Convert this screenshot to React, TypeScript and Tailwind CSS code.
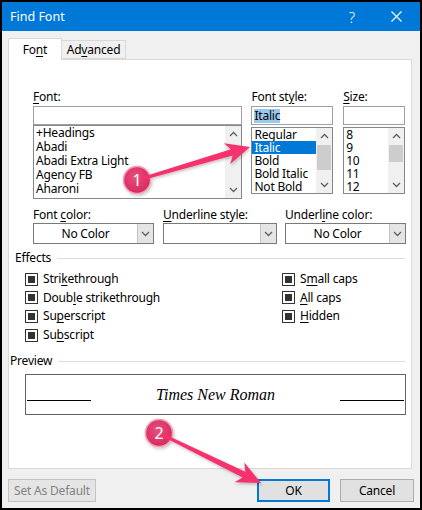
import React from "react";

// access-key underline
const K = ({ children }: { children: React.ReactNode }) => (
  <span className="underline underline-offset-[2px] decoration-[1px]">{children}</span>
);

function Chev({ up }: { up?: boolean }) {
  return (
    <svg width="9" height="6" viewBox="0 0 9 6">
      <polyline
        points={up ? "1,5 4.5,1.5 8,5" : "1,1 4.5,4.5 8,1"}
        fill="none"
        stroke="#606060"
        strokeWidth="1.3"
      />
    </svg>
  );
}

interface ListProps {
  items: string[];
  sel?: number;
  box: string;
  row: string;
  thumb: string;
}

function ListBox({ items, sel, box, row, thumb }: ListProps) {
  return (
    <div className={`flex border border-[#828790] bg-white ${box}`}>
      <div className="flex-1 flex flex-col">
        {items.map((it, i) => (
          <div
            key={it}
            className={`${row} flex items-center pl-[2px] whitespace-nowrap ${
              i === sel ? "bg-[#0078d7] text-white" : ""
            }`}
          >
            {it}
          </div>
        ))}
      </div>
      <div className="w-[16px] bg-[#f0f0f0] flex flex-col">
        <div className="h-[16px] flex items-center justify-center">
          <Chev up />
        </div>
        <div className="flex-1 flex flex-col">
          <div className={`bg-[#cdcdcd] mx-[1px] ${thumb}`} />
        </div>
        <div className="h-[16px] flex items-center justify-center">
          <Chev />
        </div>
      </div>
    </div>
  );
}

function Drop({ value, w }: { value: string; w: string }) {
  return (
    <div className={`flex h-[21px] border border-[#7a7a7a] bg-white ${w}`}>
      <div className="flex-1 flex items-center justify-center">{value}</div>
      <div className="w-[16px] bg-[#e5e5e5] border-l border-[#c4c4c4] flex items-center justify-center">
        <Chev />
      </div>
    </div>
  );
}

function Check({ children }: { children: React.ReactNode }) {
  return (
    <div className="h-[18.6px] flex items-center">
      <div className="w-[13px] h-[13px] border border-[#333] bg-white flex items-center justify-center mr-[5px]">
        <div className="w-[7px] h-[7px] bg-[#333]" />
      </div>
      <span>{children}</span>
    </div>
  );
}

// polygon for a tapered annotation arrow
function arrowPts(t: [number, number], p: [number, number]) {
  const dx = p[0] - t[0];
  const dy = p[1] - t[1];
  const len = Math.hypot(dx, dy);
  const ux = dx / len;
  const uy = dy / len;
  const nx = -uy;
  const ny = ux;
  const at = (d: number, w: number) =>
    `${(p[0] - ux * d + nx * w).toFixed(1)},${(p[1] - uy * d + ny * w).toFixed(1)}`;
  return [
    `${(t[0] + nx * 1.5).toFixed(1)},${(t[1] + ny * 1.5).toFixed(1)}`,
    at(19, 3.2),
    at(24, 11),
    `${p[0]},${p[1]}`,
    at(24, -11),
    at(19, -3.2),
    `${(t[0] - nx * 1.5).toFixed(1)},${(t[1] - ny * 1.5).toFixed(1)}`,
  ].join(" ");
}

function Annotations() {
  return (
    <svg className="absolute left-0 top-0 pointer-events-none" width="422" height="510" viewBox="0 0 422 510">
      <defs>
        <filter id="sh" x="-20%" y="-20%" width="140%" height="140%">
          <feDropShadow dx="1" dy="1.5" stdDeviation="1.5" floodColor="#000" floodOpacity="0.25" />
        </filter>
        <radialGradient id="cg" cx="45%" cy="40%" r="60%">
          <stop offset="0%" stopColor="#e9507f" />
          <stop offset="100%" stopColor="#d8285e" />
        </radialGradient>
      </defs>
      <g filter="url(#sh)">
        <circle cx="137" cy="180" r="13.5" fill="url(#cg)" stroke="#f29ab6" strokeWidth="1.5" />
        <polygon points={arrowPts([141, 179], [250, 147])} fill="#f5336d" />
        <circle cx="159" cy="433" r="13.5" fill="url(#cg)" stroke="#f29ab6" strokeWidth="1.5" />
        <polygon points={arrowPts([163, 435], [261, 483])} fill="#f5336d" />
      </g>
      <text x="137" y="186" textAnchor="middle" fill="#fff" fontSize="16" fontFamily="Noto Sans, sans-serif">
        1
      </text>
      <text x="159" y="439" textAnchor="middle" fill="#fff" fontSize="16" fontFamily="Noto Sans, sans-serif">
        2
      </text>
    </svg>
  );
}

export default function App() {
  return (
    <div className="relative w-[422px] h-[510px] bg-black p-[2px] font-['Noto_Sans',sans-serif] text-[12px] leading-[16px] tracking-[-0.2px] text-black">
      <div className="w-full h-full bg-[#f0f0f0] flex flex-col">
        {/* title bar */}
        <div className="h-[29px] bg-[#0078d7] flex items-center text-white">
          <span className="ml-[8px] text-[12.5px] tracking-normal">Find Font</span>
          <span className="ml-auto mr-[36px] text-[15px] font-light">?</span>
          <svg width="11" height="11" viewBox="0 0 11 11" className="mr-[18px]">
            <path d="M0.5 0.5 L10.5 10.5 M10.5 0.5 L0.5 10.5" stroke="#fff" strokeWidth="1.1" />
          </svg>
        </div>

        {/* tabs */}
        <div className="flex items-start ml-[6px] mt-[7px] relative z-10">
          <div className="w-[54px] h-[22px] bg-white border border-b-0 border-[#d9d9d9] flex items-center justify-center">
            Fo<K>n</K>t
          </div>
          <div className="w-[64px] h-[19px] mt-[2px] bg-[#f0f0f0] border border-l-0 border-[#d9d9d9] flex items-center justify-center">
            Ad<K>v</K>anced
          </div>
        </div>

        {/* panel */}
        <div className="ml-[6px] w-[404px] h-[410px] -mt-px bg-white border border-[#d9d9d9] flex flex-col px-[6px] pt-[29px]">
          <div className="flex ml-[18px]">
            <div className="w-[210px] flex flex-col">
              <div><K>F</K>ont:</div>
              <div className="h-[19px] mt-[1px] border border-[#a0a0a0] bg-white" />
              <ListBox
                items={["+Headings", "Abadi", "Abadi Extra Light", "Agency FB", "Aharoni"]}
                box="h-[74px]"
                row="h-[14px] leading-[14px]"
                thumb="h-0"
              />
            </div>
            <div className="w-[82px] ml-[9px] flex flex-col">
              <div>Font st<K>y</K>le:</div>
              <div className="h-[19px] mt-[1px] border border-[#a0a0a0] bg-white flex items-center px-[2px]">
                <span className="bg-[#99c9ef] leading-[14px]">Italic</span>
              </div>
              <ListBox
                items={["Regular", "Italic", "Bold", "Bold Italic", "Not Bold"]}
                sel={1}
                box="h-[67px] mt-[2px]"
                row="h-[13px] leading-[13px]"
                thumb="h-[25px] mt-[1px]"
              />
            </div>
            <div className="w-[62px] ml-[10px] flex flex-col">
              <div><K>S</K>ize:</div>
              <div className="h-[19px] mt-[1px] border border-[#a0a0a0] bg-white" />
              <ListBox
                items={["8", "9", "10", "11", "12"]}
                box="h-[67px] mt-[2px]"
                row="h-[13px] leading-[13px]"
                thumb="h-[17px] mt-[1px]"
              />
            </div>
          </div>

          {/* dropdowns */}
          <div className="flex ml-[18px] mt-[8px]">
            <div className="flex flex-col">
              <div>Font <K>c</K>olor:</div>
              <Drop value="No Color" w="w-[121px]" />
            </div>
            <div className="flex flex-col ml-[9px]">
              <div><K>U</K>nderline style:</div>
              <Drop value="" w="w-[114px]" />
            </div>
            <div className="flex flex-col ml-[8px]">
              <div>Underl<K>i</K>ne color:</div>
              <Drop value="No Color" w="w-[121px]" />
            </div>
          </div>

          {/* effects */}
          <div className="flex items-center mt-[6px]">
            <span>Effects</span>
            <div className="flex-1 h-px bg-[#dcdcdc] ml-[6px]" />
          </div>
          <div className="flex mt-[4px] ml-[10px]">
            <div className="w-[257px] flex flex-col">
              <Check>Stri<K>k</K>ethrough</Check>
              <Check>Doub<K>l</K>e strikethrough</Check>
              <Check>Su<K>p</K>erscript</Check>
              <Check>Su<K>b</K>script</Check>
            </div>
            <div className="flex flex-col">
              <Check>S<K>m</K>all caps</Check>
              <Check><K>A</K>ll caps</Check>
              <Check><K>H</K>idden</Check>
            </div>
          </div>

          {/* preview */}
          <div className="flex items-center mt-[9px] -ml-[5px]">
            <span>Preview</span>
            <div className="flex-1 h-px bg-[#dcdcdc] ml-[6px]" />
          </div>
          <div className="ml-[10px] w-[381px] h-[41px] mt-[5px] border border-[#646464] flex items-center px-[1px]">
            <div className="w-[64px] h-px bg-black mt-[11px]" />
            <div className="flex-1 text-center font-['Liberation_Serif',serif] italic text-[16px] leading-[20px] tracking-normal">
              Times New Roman
            </div>
            <div className="w-[64px] h-px bg-black mt-[11px]" />
          </div>
        </div>

        {/* buttons */}
        <div className="flex mt-[10px] ml-[6px]">
          <div className="w-[88px] h-[23px] bg-[#e5e5e5] border border-[#c4c4c4] text-[#838383] flex items-center justify-center">
            Set As Default
          </div>
          <div className="w-[73px] h-[23px] ml-[161px] bg-[#e1e1e1] border-2 border-[#0078d7] flex items-center justify-center">
            OK
          </div>
          <div className="w-[74px] h-[23px] ml-[10px] bg-[#e1e1e1] border border-[#adadad] flex items-center justify-center">
            Cancel
          </div>
        </div>
      </div>
      <Annotations />
    </div>
  );
}
